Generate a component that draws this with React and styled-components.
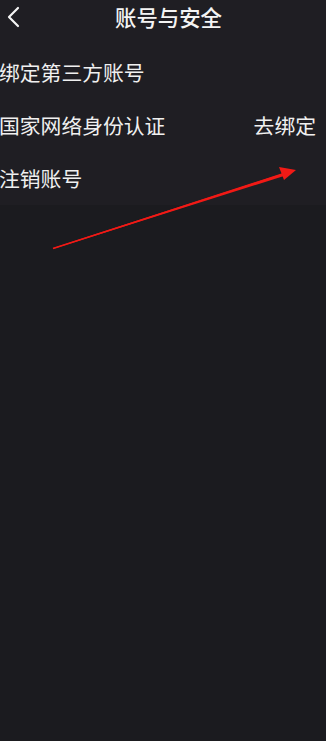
import React from 'react';
import styled, { createGlobalStyle } from 'styled-components';

const GlobalStyle = createGlobalStyle`
  html, body {
    margin: 0;
    padding: 0;
    background: #1b1b1f;
  }
  body {
    font-family: "Noto Sans CJK SC", "Noto Sans", sans-serif;
    color: #f2f2f2;
  }
`;

const Page = styled.div`
  position: relative;
  width: 326px;
  height: 741px;
  background: #1b1b1f;
  overflow: hidden;
`;

const Panel = styled.div`
  background: #1f1e23;
  height: 205px;
  box-sizing: border-box;
`;

const Header = styled.div`
  position: relative;
  height: 34px;
  margin-bottom: 12px;
  display: flex;
  align-items: center;
  justify-content: center;
`;

const BackButton = styled.div`
  position: absolute;
  left: 6px;
  top: 5px;
  width: 16px;
  height: 24px;
  display: flex;
  align-items: center;
`;

const Title = styled.h1`
  margin: 0 0 0 11px;
  font-size: 21.4px;
  font-weight: 500;
  line-height: 34px;
  color: #f4f4f4;
`;

const Row = styled.div`
  height: 53px;
  display: flex;
  align-items: center;
  justify-content: space-between;
  padding-right: 10px;
`;

const Label = styled.span`
  font-size: 20.8px;
  line-height: 1;
  color: #f0f0f0;
  margin-left: -1px;
`;

const Action = styled.span`
  font-size: 20.8px;
  line-height: 1;
  color: #f0f0f0;
`;

const Overlay = styled.svg`
  position: absolute;
  left: 0;
  top: 0;
  pointer-events: none;
`;

const rows = [
  { label: '绑定第三方账号' },
  { label: '国家网络身份认证', action: '去绑定' },
  { label: '注销账号' },
];

export default function App() {
  return (
    <Page>
      <GlobalStyle />
      <Panel>
        <Header>
          <BackButton>
            <svg width="14" height="22" viewBox="0 0 14 22">
              <path d="M12 2 L3 11 L12 20" fill="none" stroke="#f4f4f4" strokeWidth="2.2" strokeLinecap="round" strokeLinejoin="round" />
            </svg>
          </BackButton>
          <Title>账号与安全</Title>
        </Header>
        {rows.map((r) => (
          <Row key={r.label}>
            <Label>{r.label}</Label>
            {r.action && <Action>{r.action}</Action>}
          </Row>
        ))}
      </Panel>
      <Overlay width="326" height="741" viewBox="0 0 326 741">
        <polygon points="53,248 283,173 284,176 53,249" fill="#f11a16" />
        <line x1="53" y1="248.5" x2="284" y2="174" stroke="#f11a16" strokeWidth="1.6" />
        <polygon points="296,170 279,167 284,180" fill="#f11a16" />
      </Overlay>
    </Page>
  );
}
